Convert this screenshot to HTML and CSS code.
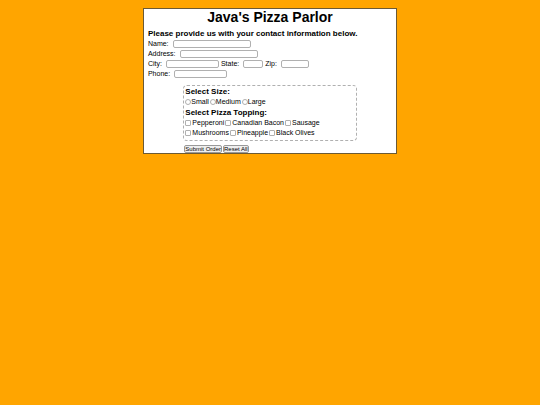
FILE: index.html
```
<!DOCTYPE html>
<html lang="en">
<head>
    <meta charset="UTF-8">
    <meta name="viewport" content="width=device-width, initial-scale=1.0">
    <title>Java's Pizza Parlor</title>
    <link rel="stylesheet" href="styles.css">
</head>
<body>
    <form class="order">
        <h1>Java's Pizza Parlor</h1>
        <h2>Please provide us with your contact information below.</h2>
        <div class="row">
            <label for="name">Name:</label>
            <input type="text" id="name" class="long">
        </div>
        <div class="row">
            <label for="address">Address:</label>
            <input type="text" id="address" class="long">
        </div>
        <div class="row">
            <label for="city">City:</label>
            <input type="text" id="city" class="medium">
            <label for="state">State:</label>
            <input type="text" id="state" class="tiny">
            <label for="zip">Zip:</label>
            <input type="text" id="zip" class="short">
        </div>
        <div class="row">
            <label for="phone">Phone:</label>
            <input type="text" id="phone" class="medium">
        </div>

        <div class="choices">
            <div class="pizza">
                <h2>Select Size:</h2>
                <div class="row options">
                    <label class="option"><input type="radio" name="size">Small</label>
                    <label class="option"><input type="radio" name="size">Medium</label>
                    <label class="option"><input type="radio" name="size">Large</label>
                </div>
                <h2>Select Pizza Topping:</h2>
                <div class="row options toppings">
                    <label class="option"><input type="checkbox" name="topping">Pepperoni</label>
                    <label class="option"><input type="checkbox" name="topping">Canadian Bacon</label>
                    <label class="option"><input type="checkbox" name="topping">Sausage</label>
                </div>
                <div class="row options toppings">
                    <label class="option"><input type="checkbox" name="topping">Mushrooms</label>
                    <label class="option"><input type="checkbox" name="topping">Pineapple</label>
                    <label class="option"><input type="checkbox" name="topping">Black Olives</label>
                </div>
            </div>
            <div class="buttons">
                <button type="submit">Submit Order</button>
                <button type="reset">Reset All</button>
            </div>
        </div>
    </form>
</body>
</html>
```

FILE: styles.css
```
body {
    background-color: orange;
    font-family: "Liberation Sans", Arial, sans-serif;
    font-size: 7px;
    line-height: 10px;
    color: black;
    margin: 8px;
}

.order {
    width: 48.5%;
    margin: 0 auto;
    padding: 0 4px;
    box-sizing: border-box;
    background-color: white;
    border: 1px solid #6b5a35;
}

h1 {
    font-size: 14px;
    line-height: 16px;
    text-align: center;
    margin: 0 0 3px;
}

h2 {
    font-size: 8px;
    line-height: 11px;
    margin: 0;
}

.row {
    display: flex;
    align-items: center;
    gap: 2px;
}

.row input {
    box-sizing: border-box;
    height: 8px;
    margin: 0;
    padding: 0 1px;
    font-size: 6px;
    background-color: white;
    border: 1px solid #b0b0b0;
    border-radius: 2px;
}

.row input[type="text"] {
    margin-left: 2px;
}

.row .long {
    width: 78px;
}

.row .medium {
    width: 53px;
}

.row .short {
    width: 28px;
}

.row .tiny {
    width: 20px;
}

.choices {
    width: 71%;
    margin: 6px auto 0;
}

.pizza {
    padding: 0 1px 2px;
    border: 1px dashed #b0b0b0;
    border-radius: 4px;
}

.options {
    gap: 1px;
}

.option {
    display: flex;
    align-items: center;
}

.row .option input {
    appearance: none;
    width: 6px;
    height: 6px;
    padding: 0;
    border-radius: 1px;
}

.row .option input[type="radio"] {
    border-radius: 50%;
}

.row .option input:checked {
    background-color: #0075ff;
}

.toppings .option {
    gap: 1px;
}

.buttons {
    display: flex;
    gap: 1px;
    margin-top: 4px;
    padding-left: 1px;
}

.buttons button {
    font-family: inherit;
    font-size: 6px;
    line-height: 6px;
    padding: 0;
    color: black;
    background-color: #efefef;
    border: 1px solid #999;
    border-radius: 2px;
}
```
